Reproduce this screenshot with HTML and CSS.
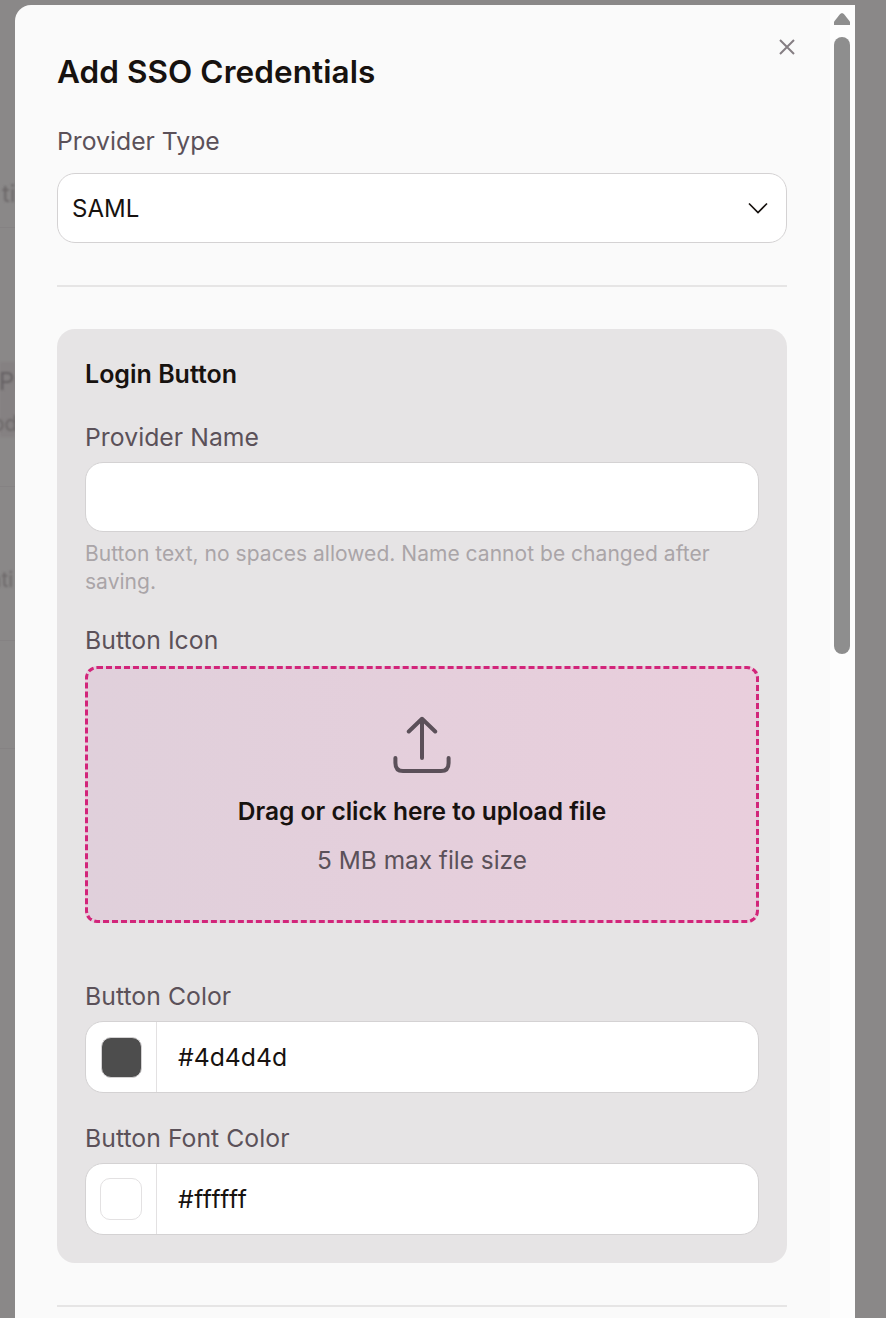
FILE: index.html
```html
<!DOCTYPE html>
<html lang="en">
<head>
<meta charset="utf-8">
<title>Add SSO Credentials</title>
<link rel="stylesheet" href="styles.css">
</head>
<body>
<div class="backdrop" aria-hidden="true">
  <span class="band"></span>
  <span class="ghost g1">ti</span>
  <span class="rule r1"></span>
  <span class="ghost g2">Pr</span>
  <span class="ghost g3">od</span>
  <span class="rule r2"></span>
  <span class="ghost g4">nti</span>
  <span class="rule r3"></span>
  <span class="rule r4"></span>
</div>
<div class="modal">
  <main class="content">
    <button class="close" aria-label="Close">
      <svg width="18" height="18" viewBox="0 0 18 18"><path d="M2 2 L16 16 M16 2 L2 16" fill="none" stroke="#857e83" stroke-width="2"/></svg>
    </button>
    <h1 class="title">Add SSO Credentials</h1>
    <div class="label first">Provider Type</div>
    <div class="field select">
      <span>SAML</span>
      <svg width="20" height="12" viewBox="0 0 20 12"><path d="M1 1.5 L10 10.5 L19 1.5" fill="none" stroke="#17120f" stroke-width="1.7"/></svg>
    </div>
    <hr class="divider">
    <section class="card">
      <h2 class="card-title">Login Button</h2>
      <div class="label">Provider Name</div>
      <div class="field"></div>
      <p class="hint">Button text, no spaces allowed. Name cannot be changed after saving.</p>
      <div class="label icon-label">Button Icon</div>
      <div class="drop">
        <svg class="upload" width="60" height="60" viewBox="0 0 60 60"><path d="M30 43 V4 M16.8 16.5 L30 3.8 L43.2 16.5 M3.4 43 V48 Q3.4 56 11 56 H49 Q56.6 56 56.6 48 V43" fill="none" stroke="#5b5059" stroke-width="4" stroke-linecap="round" stroke-linejoin="round"/></svg>
        <div class="drop-title">Drag or click here to upload file</div>
        <div class="drop-sub">5 MB max file size</div>
      </div>
      <div class="label color-label">Button Color</div>
      <div class="field color">
        <div class="swatch-cell"><span class="swatch dark"></span></div>
        <span class="hex">#4d4d4d</span>
      </div>
      <div class="label font-label">Button Font Color</div>
      <div class="field color">
        <div class="swatch-cell"><span class="swatch light"></span></div>
        <span class="hex hex-light">#ffffff</span>
      </div>
    </section>
    <hr class="divider bottom">
  </main>
  <aside class="scrollbar">
    <span class="arrow"></span>
    <span class="thumb"></span>
  </aside>
</div>
</body>
</html>
```
FILE: styles.css
```css
* { box-sizing: border-box; }
html, body { margin: 0; height: 100%; overflow: hidden; }
body {
  background: #8a8888;
  font-family: Inter, "Liberation Sans", sans-serif;
  color: #17120f;
  padding: 5px 0 0 15px;
}
.backdrop { position: absolute; left: 0; top: 0; width: 15px; height: 1318px; overflow: hidden; }
.band { position: absolute; left: 0; top: 362px; width: 15px; height: 75px; background: #858182; filter: blur(1px); }
.ghost { position: absolute; font-size: 24px; color: #6b6768; filter: blur(1.2px); white-space: nowrap; }
.g1 { left: 2px; top: 179px; }
.g2 { left: -1px; top: 367px; color: #656163; }
.g3 { left: -8px; top: 411px; font-size: 21px; }
.g4 { left: -11px; top: 567px; font-size: 21px; }
.rule { position: absolute; left: 0; width: 15px; height: 1px; background: #858283; }
.r1 { top: 227px; }
.r2 { top: 486px; }
.r3 { top: 640px; }
.r4 { top: 748px; }

.modal {
  width: 840px;
  height: 1400px;
  display: flex;
  background: #fafafa;
  border-radius: 16px 0 0 0;
  overflow: hidden;
}
.content { position: relative; width: 815px; padding: 0 43px 0 42px; }
.close {
  position: absolute; top: 33px; right: 34px;
  width: 18px; height: 18px; padding: 0; border: 0; background: none; display: block;
}
.close svg { display: block; }
.title { margin: 0; padding-top: 48px; font-size: 31.5px; line-height: 38px; font-weight: 600; letter-spacing: .07px; }
.label { font-size: 24.75px; line-height: 28px; color: #5b5159; letter-spacing: .04px; }
.label.first { margin-top: 36px; margin-bottom: 18px; letter-spacing: 0; }
.field {
  height: 70px;
  background: #fff;
  border: 1.5px solid #d4d2d3;
  border-radius: 18px;
  font-size: 24px;
}
.select {
  display: flex; align-items: center; justify-content: space-between;
  padding: 0 18px 0 14px;
}
.divider { margin: 42px 0 0; border: 0; height: 2px; background: #e6e5e5; }
.card {
  margin-top: 42px;
  height: 934px;
  padding: 28px;
  background: #e6e4e5;
  border-radius: 18px;
}
.card-title { margin: 0 0 32px; font-size: 25px; line-height: 34px; font-weight: 600; }
.card > .label { margin-bottom: 11px; }
.hint { margin: 8px 0 0; font-size: 21px; line-height: 28px; color: #aaa5a8; letter-spacing: .03px; }
.card > .icon-label { margin-top: 30px; margin-bottom: 12px; }
.drop {
  height: 257px;
  display: flex; flex-direction: column; align-items: center;
  padding-top: 46px;
  border: 3px dashed #d2257a;
  border-radius: 12px;
  background: linear-gradient(90deg, #e0d0db, #e9cedc);
}
.upload { display: block; }
.drop-title { margin-top: 21px; font-size: 24.5px; line-height: 30px; font-weight: 600; }
.drop-sub { margin-top: 18px; font-size: 24.4px; line-height: 32px; color: #5b5159; }
.card > .color-label { margin-top: 59px; margin-bottom: 11px; }
.card > .font-label { margin-top: 31px; margin-bottom: 11px; }
.color { height: 72px; display: flex; align-items: center; }
.swatch-cell {
  width: 71px; height: 100%;
  display: flex; align-items: center; justify-content: center;
  border-right: 1.5px solid #e3e1e2;
}
.swatch { width: 41px; height: 41px; border-radius: 10px; }
.dark { background: #4d4d4d; border: 1px solid #d4d2d3; }
.light { width: 42px; height: 42px; background: #fff; border: 1.5px solid #e3e1e2; }
.hex { margin-left: 21px; font-size: 24.75px; }
.hex-light { letter-spacing: .5px; }
.divider.bottom { margin-top: 42px; }
.scrollbar {
  width: 25px;
  background: #fdfdfd;
  padding: 8px 5px 0 4px;
  display: flex; flex-direction: column;
}
.arrow {
  width: 16px; height: 12px;
  background: #8e8e8e;
  clip-path: polygon(50% 0, 62% 8%, 100% 72%, 100% 100%, 0 100%, 0 72%, 38% 8%);
}
.thumb {
  margin-top: 12px;
  width: 16px; height: 617px;
  background: #8e8e8e;
  border-radius: 8px;
}
```
